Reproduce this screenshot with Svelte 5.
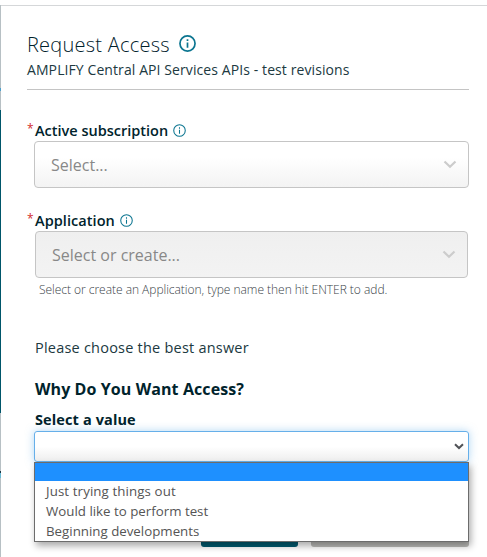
<script>
  const options = ['', 'Just trying things out', 'Would like to perform test', 'Beginning developments'];
</script>

{#snippet info(size, sw)}
  <svg class="info" width={size} height={size} viewBox="0 0 16 16" fill="none" stroke="#0b7590" stroke-width={sw}>
    <circle cx="8" cy="8" r="7.1" />
    <path d="M8 7v4.9M8 4.1v1.6" />
  </svg>
{/snippet}

<div class="page">
  <div class="strip"><i class="a"></i><i class="b"></i><i class="c"></i><i class="d"></i><i class="e"></i><i class="f"></i><i class="g"></i></div>
  <main class="modal">
    <header>
      <h1><span>Request Access</span>{@render info(17, 1.6)}</h1>
      <p class="sub"><span>AMPLIFY Central API Services APIs - test revisions</span></p>
    </header>
    <section class="field">
      <div class="label"><b class="req">*</b><span class="l1">Active subscription</span>{@render info(13, 1.3)}</div>
      <div class="select">
        <span class="p1">Select...</span>
        <svg width="14" height="9" viewBox="0 0 14 9" fill="none" stroke="#ccc" stroke-width="2.2"><path d="M1.5 1.5 7 6.8l5.5-5.3" /></svg>
      </div>
    </section>
    <section class="field second">
      <div class="label"><b class="req">*</b><span class="l2">Application</span>{@render info(13, 1.3)}</div>
      <div class="select disabled">
        <span class="p2">Select or create...</span>
        <svg width="14" height="9" viewBox="0 0 14 9" fill="none" stroke="#ccc" stroke-width="2.2"><path d="M1.5 1.5 7 6.8l5.5-5.3" /></svg>
      </div>
      <p class="help"><span>Select or create an Application, type name then hit ENTER to add.</span></p>
    </section>
    <section class="question">
      <p class="please"><span>Please choose the best answer</span></p>
      <h2><span>Why Do You Want Access?</span></h2>
      <div class="vlabel"><span>Select a value</span></div>
      <div class="combo">
        <svg width="10" height="7" viewBox="0 0 10 7" fill="none" stroke="#505256" stroke-width="2"><path d="M1 1.2 5 5l4-3.8" /></svg>
        <ul>
          {#each options as o, i}
            <li class="o{i}" class:active={i === 0}><span>{o}</span></li>
          {/each}
        </ul>
      </div>
    </section>
    <footer><div class="primary"></div><div class="secondary"></div></footer>
  </main>
</div>

<style>
  :global(body) { background: #fff; }
  .page { width: 487px; height: 557px; overflow: hidden; display: flex; font-family: "Open Sans", "Noto Sans", sans-serif; color: #0b2730; }
  .page * { box-sizing: border-box; }
  span { white-space: nowrap; }
  h1, h2, p, ul { margin: 0; padding: 0; }
  .strip { width: 1px; flex: none; display: flex; flex-direction: column; }
  .strip i { display: block; flex: none; }
  .a { height: 5px; background: #fff; }
  .b { height: 83px; background: #b7c0c4; }
  .c { height: 3px; background: #4b9fcc; }
  .d { height: 19px; background: #b7c0c4; }
  .e { height: 303px; background: #00566a; }
  .f { height: 58px; background: #b7c0c4; }
  .g { height: 86px; background: linear-gradient(#183744 0 2px, #68b9d4 2px 7px, #b7c0c4 7px); }
  .modal { width: 486px; margin-top: 5px; border-top: 1px solid #d5d7d9; padding-left: 26px; flex: none; }
  header { width: 442px; height: 84px; border-bottom: 1px solid #c4c4c4; padding-top: 25px; }
  h1 { display: flex; height: 28px; line-height: 28px; font-size: 20px; font-weight: 300; letter-spacing: 0.24px; color: #00202a; }
  h1 .info { margin: 4px 0 0 9px; }
  .info { display: block; flex: none; }
  .sub { font-size: 14px; line-height: 22px; letter-spacing: 0.09px; color: #20393f; }
  .field { padding-top: 30px; }
  .label { height: 21px; display: flex; font-size: 14.5px; font-weight: 600; line-height: 21px; color: #00232c; }
  .req { width: 8px; color: #d22b2b; font-size: 12px; font-weight: 400; line-height: 17px; }
  .l1 { letter-spacing: 0; }
  .l2 { letter-spacing: 0.06px; }
  .label .info { margin: 4px 0 0 5px; }
  .select { width: 435px; height: 47px; margin-left: 7px; border: 1px solid #c5c5c5; border-radius: 4px; background: linear-gradient(#fff 35%, #f3f3f3); display: flex; align-items: center; justify-content: space-between; padding: 0 11px 0 16px; font-size: 16px; color: #888; }
  .select.disabled { width: 433px; margin-left: 8px; background: linear-gradient(#efefef, #f3f3f3); }
  .second { padding-top: 22px; }
  .help { margin-left: 12px; padding-top: 1px; line-height: 22px; height: 23px; font-size: 12px; font-weight: 300; letter-spacing: -0.03px; color: #394247; }
  .please { margin: 36px 0 0 8px; height: 22px; line-height: 22px; font-size: 14.5px; letter-spacing: 0.22px; color: #20393f; }
  h2 { margin: 17px 0 0 8px; height: 26px; line-height: 26px; font-size: 16px; font-weight: 700; letter-spacing: 0.09px; color: #00232c; }
  .vlabel { margin: 7px 0 0 8px; height: 21px; line-height: 21px; font-size: 14.5px; font-weight: 700; letter-spacing: 0.12px; color: #00232c; }
  .combo { position: relative; width: 435px; height: 31px; margin: 1px 0 0 7px; border: 1px solid #66afe9; border-radius: 3px; box-shadow: 0 0 9px #66afe980; background: linear-gradient(#fff 50%, #eee); display: flex; justify-content: flex-end; align-items: center; padding-right: 4px; }
  ul { position: absolute; z-index: 2; top: 30px; left: -1px; width: 435px; height: 80px; border: 1px solid #6c6c6c; background: #fff; list-style: none; box-shadow: 2px 4px 7px #0005; font-size: 13.3px; color: #555; }
  li { height: 20px; line-height: 20px; padding-left: 11px; }
  li.active { height: 18px; background: #1e90ff; }
  .o1 { letter-spacing: 0.1px; }
  footer { display: flex; gap: 13px; padding-left: 174px; margin-top: 55px; }
  footer div { height: 30px; border-radius: 3px; }
  .primary { width: 97px; background: #005b70; }
  .secondary { width: 158px; background: #bcbcb9; }
</style>
